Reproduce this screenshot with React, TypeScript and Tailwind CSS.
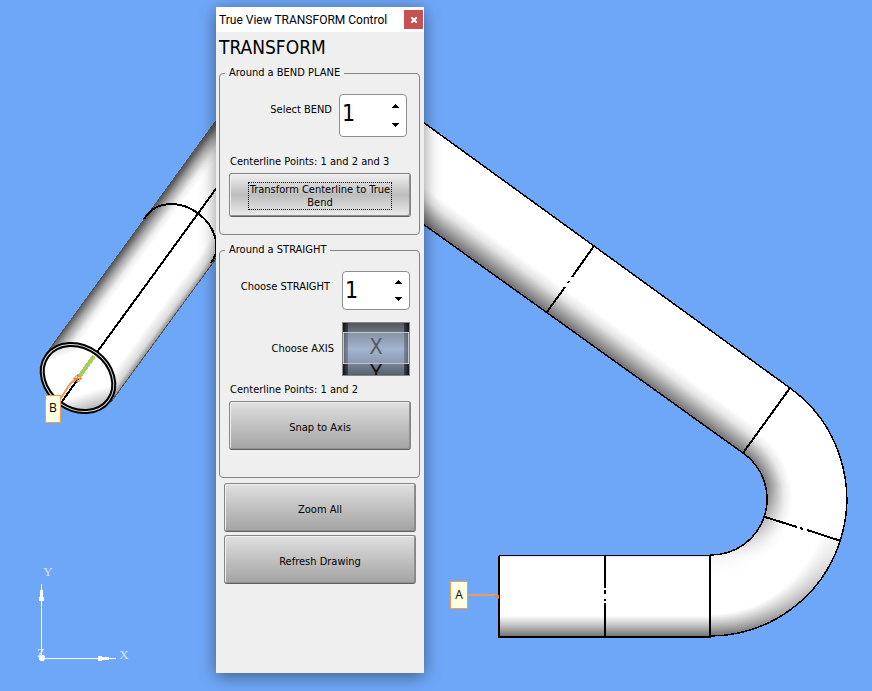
import { useState } from "react";

type SpinBoxProps = {
  id: string;
  value: number;
  onChange: (value: number) => void;
  className: string;
};

function SpinBox({ id, value, onChange, className }: SpinBoxProps) {
  return (
    <div
      className={`flex w-[68px] overflow-hidden rounded border border-[#8f8f8f] bg-white ${className}`}
    >
      <input
        id={id}
        inputMode="numeric"
        value={value}
        onChange={(e) => onChange(Number(e.target.value) || 1)}
        className="h-9 w-11 min-w-0 pl-0.5 text-[23px] leading-9 outline-none"
      />
      <div className="flex flex-1 flex-col py-0.5">
        <button
          aria-label="Increase"
          onClick={() => onChange(value + 1)}
          className="flex flex-1 items-center justify-center"
        >
          <svg width="7" height="4" shapeRendering="crispEdges">
            <path d="M3 0h1v1h1v1h1v1h1v1H0V3h1V2h1V1h1z" />
          </svg>
        </button>
        <button
          aria-label="Decrease"
          onClick={() => onChange(Math.max(1, value - 1))}
          className="flex flex-1 items-center justify-center"
        >
          <svg width="7" height="4" shapeRendering="crispEdges">
            <path d="M0 0h7v1H6v1H5v1H4v1H3V3H2V2H1V1H0z" />
          </svg>
        </button>
      </div>
    </div>
  );
}

function AxisWheel({ axis, onChange }: { axis: string; onChange: (axis: string) => void }) {
  const axes = ["X", "Y", "Z"];
  const start = axes.indexOf(axis);
  const visible = [axes[start], axes[(start + 1) % 3]];

  return (
    <div
      role="radiogroup"
      aria-labelledby="axis-label"
      className="relative h-[54px] w-[68px] overflow-hidden border border-[#858585] bg-linear-to-b from-[#50555b] via-[#a2b5cf] to-[#56616f] pt-2.5"
    >
      <div className="absolute inset-y-0 left-0 w-[5px] bg-linear-to-r from-black/80 to-black/40" />
      <div className="absolute inset-y-0 right-0 w-[5px] bg-linear-to-l from-black/80 to-black/40" />
      {visible.map((name) => (
        <label
          key={name}
          className="relative block h-[26px] text-center text-[22px] leading-7 text-[#111]"
        >
          <input
            type="radio"
            name="axis"
            value={name}
            checked={name === axis}
            onChange={() => onChange(name)}
            className="sr-only"
          />
          {name}
        </label>
      ))}
      <div className="pointer-events-none absolute inset-x-0 top-[9px] h-8 border border-[#c4c4c4] bg-[#a5b4ce]/45" />
    </div>
  );
}

function PushButton({
  label,
  focused,
}: {
  label: string;
  focused?: boolean;
}) {
  return (
    <button
      className={`flex items-center justify-center rounded-[3px] border border-[#858585] border-b-[#606060] leading-[13px] shadow-[inset_1px_1px_0_#f0f0f0,inset_-1px_-1px_0_#909090] ${
        focused
          ? "h-11 bg-linear-to-b from-[#f0f0f0] via-[#bdbdbd] to-[#ececec] pt-0.5"
          : "h-[49px] bg-linear-to-b from-[#e0e0e0] to-[#a3a3a3] pt-[3px]"
      }`}
    >
      {focused ? (
        <span className="w-36 border border-dotted border-black">{label}</span>
      ) : (
        label
      )}
    </button>
  );
}

function Drawing() {
  return (
    <svg className="absolute inset-0 h-full w-full" aria-hidden="true">
      <defs>
        <linearGradient id="arm" gradientUnits="userSpaceOnUse" x1="743" y1="453" x2="790" y2="388">
          <stop offset="0" stopColor="#747474" />
          <stop offset=".1" stopColor="#a2a2a2" />
          <stop offset=".24" stopColor="#e4e4e4" />
          <stop offset=".36" stopColor="#fff" />
        </linearGradient>
        <linearGradient id="base" gradientUnits="userSpaceOnUse" x1="0" y1="555" x2="0" y2="637">
          <stop offset="0" stopColor="#ddd" />
          <stop offset=".04" stopColor="#fff" />
          <stop offset=".74" stopColor="#fff" />
          <stop offset=".85" stopColor="#c6c6c6" />
          <stop offset="1" stopColor="#707070" />
        </linearGradient>
        <linearGradient id="left" gradientUnits="userSpaceOnUse" x1="46" y1="354" x2="111" y2="402">
          <stop offset="0" stopColor="#5c5c5c" />
          <stop offset=".08" stopColor="#a8a8a8" />
          <stop offset=".18" stopColor="#eee" />
          <stop offset=".25" stopColor="#fff" />
          <stop offset=".8" stopColor="#fff" />
          <stop offset=".93" stopColor="#dadada" />
          <stop offset="1" stopColor="#8a8a8a" />
        </linearGradient>
        <linearGradient id="mouth" gradientUnits="userSpaceOnUse" x1="46" y1="354" x2="111" y2="402">
          <stop offset="0" stopColor="#ccc" />
          <stop offset=".18" stopColor="#fff" />
          <stop offset=".7" stopColor="#fff" />
          <stop offset="1" stopColor="#9a9a9a" />
        </linearGradient>
        <radialGradient id="inner" gradientUnits="userSpaceOnUse" cx="710" cy="499" r="137">
          <stop offset=".409" stopColor="#000" stopOpacity=".55" />
          <stop offset=".47" stopColor="#000" stopOpacity=".33" />
          <stop offset=".54" stopColor="#000" stopOpacity=".09" />
          <stop offset=".6" stopColor="#000" stopOpacity="0" />
        </radialGradient>
        <radialGradient id="outer" gradientUnits="userSpaceOnUse" cx="710" cy="499" r="137">
          <stop offset=".84" stopColor="#000" stopOpacity="0" />
          <stop offset=".91" stopColor="#000" stopOpacity=".24" />
          <stop offset="1" stopColor="#000" stopOpacity=".55" />
        </radialGradient>
        <linearGradient id="fadeDown" gradientUnits="userSpaceOnUse" x1="0" y1="485" x2="0" y2="558">
          <stop offset="0" stopColor="#fff" />
          <stop offset="1" stopColor="#111" />
        </linearGradient>
        <linearGradient id="fadeUp" gradientUnits="userSpaceOnUse" x1="740" y1="640" x2="835" y2="520">
          <stop offset="0" stopColor="#fff" />
          <stop offset="1" stopColor="#000" />
        </linearGradient>
        <mask id="innerMask">
          <rect x="690" y="370" width="170" height="280" fill="url(#fadeDown)" />
        </mask>
        <mask id="outerMask">
          <rect x="690" y="370" width="170" height="280" fill="url(#fadeUp)" />
        </mask>
      </defs>

      {/* left leg */}
      <path d="M46 354L226 107V245L111 402z" fill="url(#left)" />
      <g fill="none" stroke="#000" strokeWidth="2" shapeRendering="crispEdges">
        <path d="M46 354L226 107M226 245L111 402" stroke="#555" strokeWidth="1" />
        <path d="M144 219L147 215A40 32 36 0 1 211 263" />
        <path d="M95 355L226 175" />
      </g>
      <ellipse cx="78" cy="378" rx="38" ry="30" transform="rotate(36 78 378)" fill="url(#mouth)" />
      <g fill="none" transform="rotate(36 78 378)">
        <ellipse cx="78" cy="378" rx="38" ry="31" stroke="#000" strokeWidth="5" />
        <ellipse cx="78" cy="378" rx="38" ry="31" stroke="#d8d8d0" strokeWidth="1" />
      </g>
      <path d="M61 403L78 379" stroke="#000" strokeWidth="2" shapeRendering="crispEdges" />
      <path d="M79 377L94 356" stroke="#a5cf5a" strokeWidth="4" shapeRendering="crispEdges" />
      <path d="M61 398L70 384L77 378" fill="none" stroke="#ee9a5c" strokeWidth="2" />
      <g fill="none" stroke="#f58220">
        <circle cx="77.500" cy="378.500" r="3" />
        <path d="M73 378.500h9M77.500 374v9" />
      </g>

      {/* right arm, bend and base */}
      <path d="M416 117L790 388L743 453L416 219z" fill="url(#arm)" />
      <path d="M790 388A137 137 0 0 1 710 636V555A56 56 0 0 0 743 453z" fill="#fff" />
      <path
        d="M790 388A137 137 0 0 1 710 636V555A56 56 0 0 0 743 453z"
        fill="url(#inner)"
        mask="url(#innerMask)"
      />
      <path
        d="M790 388A137 137 0 0 1 710 636V555A56 56 0 0 0 743 453z"
        fill="url(#outer)"
        mask="url(#outerMask)"
      />
      <rect x="499" y="555" width="211" height="82" fill="url(#base)" />
      <g fill="none" stroke="#000" strokeWidth="2" shapeRendering="crispEdges">
        <path d="M416 117L790 388A137 137 0 0 1 710 636" strokeWidth="1.500" />
        <path d="M416 219L743 453A56 56 0 0 1 710 555" strokeWidth="1.500" />
        <path d="M499 637V555.500M498 636.500H711M710 637V555" />
        <path d="M499 555.500H711" strokeWidth="1" />
        <path d="M790 388L743 453" />
        <path d="M594 246L572 277M569 281L568 283M565 287L547 312" />
        <path d="M605 556V588M605 590V594M605 599V601M605 603V636" />
        <path d="M765 517L797 527M800 528L803 529M807 530L841 541" />
      </g>

      {/* end tags */}
      <path d="M467 595H498" stroke="#ee9a5c" strokeWidth="2" />
      <path d="M494 595H499V599z" fill="#f58220" />
      <g fill="#ffffe1" stroke="#ee9a5c">
        <rect x="450.500" y="581.500" width="17" height="27" />
        <rect x="45.500" y="395.500" width="15" height="27" />
      </g>
      <g className="font-['Open_Sans',sans-serif] text-[12px]" textAnchor="middle">
        <text x="459" y="599">A</text>
        <text x="53" y="412">B</text>
      </g>

      {/* axis tripod */}
      <g fill="#fff" shapeRendering="crispEdges">
        <path d="M41 584h1v74h-1zM41 658h75v1H41z" />
        <path d="M41 586h1l2 15h-5zM98 656l15 2v1l-15 2z" />
        <path d="M40 655h3l2 2v3l-2 1h-3l-1-1v-3z" />
      </g>
      <g
        className="font-['Liberation_Serif',serif] text-[13px]"
        fill="#dbe9ff"
        textAnchor="middle"
      >
        <text x="48" y="576">Y</text>
        <text x="124" y="659">X</text>
        <text x="41" y="657">Z</text>
      </g>
    </svg>
  );
}

export default function App() {
  const [bend, setBend] = useState(1);
  const [straight, setStraight] = useState(1);
  const [axis, setAxis] = useState("X");

  return (
    <main className="relative h-screen overflow-hidden bg-[#6fa7f8] font-['DejaVu_Sans_Condensed','DejaVu_Sans',sans-serif] text-[11px] leading-[18px] text-black">
      <Drawing />

      <section className="absolute top-[7px] left-[216px] flex h-[666px] w-52 flex-col bg-[#efefef] shadow-[0_3px_16px_rgba(0,0,0,0.45)]">
        <header className="flex h-[25px] items-center justify-between bg-white pr-px pl-[3px]">
          <span className="font-[Roboto,sans-serif] text-[12px]">True View TRANSFORM Control</span>
          <button
            aria-label="Close"
            className="flex h-[19px] w-[19px] items-center justify-center bg-[#c75050] text-white"
          >
            <svg width="6" height="6" stroke="currentColor" strokeWidth="2">
              <path d="M0 0L6 6M6 0L0 6" />
            </svg>
          </button>
        </header>

        <div className="flex flex-col pr-1 pl-[3px]">
          <h1 className="mb-0.5 text-[19px] leading-[30px]">TRANSFORM</h1>

          <fieldset className="flex flex-col rounded-sm border border-[#858585] pr-2 pb-[17px] pl-[9px]">
            <legend className="-ml-1 px-1">Around a BEND PLANE</legend>
            <div className="mt-3 mr-1 flex items-start justify-end gap-[7px]">
              <label htmlFor="bend" className="pt-[7px]">
                Select BEND
              </label>
              <SpinBox id="bend" value={bend} onChange={setBend} className="h-[43px]" />
            </div>
            <p className="mt-4 mb-0.5 pl-px">
              Centerline Points: {bend} and {bend + 1} and {bend + 2}
            </p>
            <PushButton label="Transform Centerline to True Bend" focused />
          </fieldset>

          <fieldset className="mt-1.5 flex flex-col rounded-sm border border-[#858585] pr-2 pb-[27px] pl-[9px]">
            <legend className="-ml-1 px-1">Around a STRAIGHT</legend>
            <div className="mt-3 flex items-start justify-end gap-3 pr-px">
              <label htmlFor="straight" className="pt-[7px]">
                Choose STRAIGHT
              </label>
              <SpinBox id="straight" value={straight} onChange={setStraight} className="h-[39px]" />
            </div>
            <div className="mt-3 flex items-center justify-end gap-2 pr-px">
              <span id="axis-label">Choose AXIS</span>
              <AxisWheel axis={axis} onChange={setAxis} />
            </div>
            <p className="mt-[5px] mb-0.5 pl-px">
              Centerline Points: {straight} and {straight + 1}
            </p>
            <PushButton label="Snap to Axis" />
          </fieldset>

          <div className="mt-[5px] flex flex-col gap-[3px] pr-1 pl-[5px]">
            <PushButton label="Zoom All" />
            <PushButton label="Refresh Drawing" />
          </div>
        </div>
      </section>
    </main>
  );
}
